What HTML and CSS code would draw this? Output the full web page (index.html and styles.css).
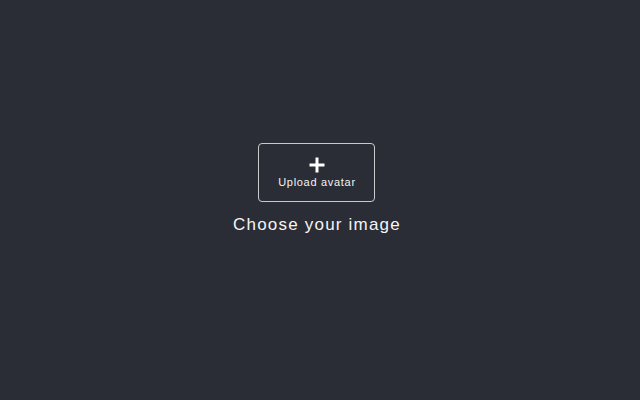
FILE: index.html
```html
<!DOCTYPE html>
<html>
<head>
<meta charset="utf-8">
<link rel="stylesheet" href="styles.css">
</head>
<body>
<main class="page">
  <div class="uploader">
    <button class="upload-box" type="button">
      <svg class="plus" width="18" height="18" viewBox="0 0 18 18" aria-hidden="true">
        <path d="M9 1.5v15M1.5 9h15" stroke="#ffffff" stroke-width="3" fill="none"/>
      </svg>
      <span class="upload-label">Upload avatar</span>
    </button>
    <p class="caption">Choose your image</p>
  </div>
</main>
</body>
</html>
```
FILE: styles.css
```css
html, body {
  margin: 0;
  padding: 0;
  height: 100%;
  background: #2a2d35;
}
.page {
  height: 400px;
  display: flex;
  justify-content: center;
  align-items: flex-start;
  font-family: "Liberation Sans", Arial, sans-serif;
  padding-right: 6px;
  box-sizing: border-box;
}
.uploader {
  margin-top: 143px;
  display: flex;
  flex-direction: column;
  align-items: center;
}
.upload-box {
  width: 117px;
  height: 59px;
  box-sizing: border-box;
  border: 1px solid #c8cacd;
  border-radius: 4px;
  background: transparent;
  display: flex;
  flex-direction: column;
  align-items: center;
  justify-content: flex-start;
  padding: 12px 0 0;
  margin: 0;
  font-family: inherit;
  font-weight: 400;
}
.plus {
  display: block;
}
.upload-label {
  margin-top: 2px;
  font-size: 11px;
  font-weight: 400;
  letter-spacing: 0.7px;
  color: #f2f3f4;
  line-height: 13px;
}
.caption {
  margin: 13px 0 0;
  font-size: 17px;
  letter-spacing: 1.2px;
  color: #f4f5f6;
  line-height: 20px;
}
```
